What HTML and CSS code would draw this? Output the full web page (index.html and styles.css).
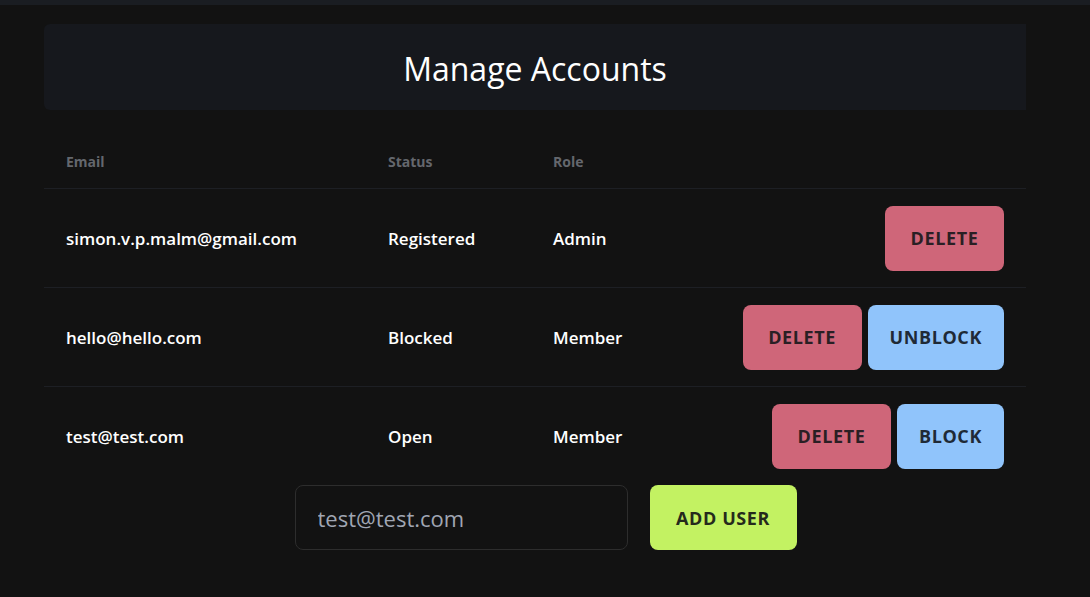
FILE: index.html
```html
<!DOCTYPE html>
<html lang="en">
<head>
<meta charset="utf-8">
<title>Manage Accounts</title>
<link rel="stylesheet" href="styles.css">
</head>
<body>
<div class="topbar"></div>
<main class="page">
  <header class="title-card"><h1>Manage Accounts</h1></header>
  <section class="table">
    <div class="row head">
      <div class="cell">Email</div>
      <div class="cell">Status</div>
      <div class="cell">Role</div>
      <div class="cell actions"></div>
    </div>
    <div class="row">
      <div class="cell">simon.v.p.malm@gmail.com</div>
      <div class="cell">Registered</div>
      <div class="cell">Admin</div>
      <div class="cell actions"><button class="btn delete">Delete</button></div>
    </div>
    <div class="row">
      <div class="cell">hello@hello.com</div>
      <div class="cell">Blocked</div>
      <div class="cell">Member</div>
      <div class="cell actions"><button class="btn delete">Delete</button><button class="btn block">Unblock</button></div>
    </div>
    <div class="row last">
      <div class="cell">test@test.com</div>
      <div class="cell">Open</div>
      <div class="cell">Member</div>
      <div class="cell actions"><button class="btn delete">Delete</button><button class="btn block">Block</button></div>
    </div>
  </section>
</main>
<form class="add-form">
  <input class="email-input" type="text" placeholder="test@test.com">
  <button type="button" class="btn add">Add user</button>
</form>
</body>
</html>
```
FILE: styles.css
```css
* { box-sizing: border-box; }
html, body { margin: 0; padding: 0; }
body {
  background: #121212;
  color: #ffffff;
  font-family: "Open Sans", "DejaVu Sans", sans-serif;
  width: 1090px;
  height: 597px;
  overflow: hidden;
}
.topbar {
  height: 5px;
  background: #1a1d22;
}
.page {
  width: 982px;
  margin-left: 44px;
  padding-top: 19px;
}
.title-card {
  height: 86px;
  padding-top: 3px;
  background: #16181d;
  border-radius: 6px 0 0 6px;
  display: flex;
  align-items: center;
  justify-content: center;
}
.title-card h1 {
  margin: 0;
  font-size: 32px;
  font-weight: 500;
  letter-spacing: 0;
  color: #ffffff;
}
.table {
  margin-top: 22px;
}
.row {
  display: grid;
  grid-template-columns: 322px 165px 1fr auto;
  align-items: center;
  border-bottom: 1px solid #1d1f24;
  padding: 16px 22px;
  height: 99px;
}
.row.head {
  height: 57px;
  padding-top: 16px;
  padding-bottom: 14px;
}
.row.last { border-bottom: none; height: 98px; }
.cell {
  font-size: 17px;
  font-weight: 600;
  color: #ffffff;
  white-space: nowrap;
}
.head .cell {
  font-size: 14px;
  font-weight: 700;
  color: #64676d;
}
.actions {
  display: flex;
  justify-content: flex-end;
  gap: 6px;
}
.btn {
  height: 65px;
  border: none;
  border-radius: 8px;
  font-family: inherit;
  font-size: 18px;
  font-weight: 700;
  text-transform: uppercase;
  color: #2a1f24;
  cursor: pointer;
  padding: 0 20px;
  letter-spacing: 0.6px;
}
.btn.delete { background: #cf6679; width: 119px; padding: 0; }
.btn.block { background: #90c4fb; color: #1f2a36; padding: 0 22px; }
.btn.add { background: #c3f262; color: #252a1c; width: 147px; padding: 0; }
.add-form {
  display: flex;
  justify-content: center;
  gap: 22px;
  margin-left: 1px;
}
.email-input {
  width: 333px;
  height: 65px;
  background: #121212;
  border: 1px solid #2d2d2d;
  border-radius: 8px;
  padding: 0 22px;
  font-family: inherit;
  font-size: 22px;
  color: #ffffff;
}
.email-input::placeholder { color: #a0a6b3; }
```
